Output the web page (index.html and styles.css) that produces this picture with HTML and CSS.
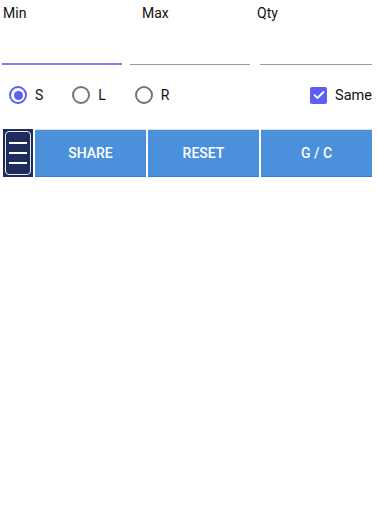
FILE: index.html
```html
<!DOCTYPE html>
<html>
<head>
<meta charset="utf-8">
<link rel="stylesheet" href="styles.css">
</head>
<body>
<div class="fields">
  <div class="field f-min">
    <div class="label">Min</div>
    <div class="line active"></div>
  </div>
  <div class="field f-max">
    <div class="label">Max</div>
    <div class="line"></div>
  </div>
  <div class="field f-qty">
    <div class="label">Qty</div>
    <div class="line"></div>
  </div>
</div>
<div class="options">
  <div class="radio r-s"><span class="circle on"><span class="dot"></span></span><span class="rtext">S</span></div>
  <div class="radio r-l"><span class="circle"></span><span class="rtext">L</span></div>
  <div class="radio r-r"><span class="circle"></span><span class="rtext">R</span></div>
  <div class="check">
    <span class="box"><svg width="12" height="10" viewBox="0 0 12 10"><path d="M1.5 5.2 L4.5 8 L10.5 2" fill="none" stroke="#fff" stroke-width="1.8" stroke-linecap="round" stroke-linejoin="round"/></svg></span>
    <span class="ctext">Same</span>
  </div>
</div>
<div class="buttons">
  <div class="menu"><div class="menu-inner"><span></span><span></span><span></span></div></div>
  <div class="btn">SHARE</div>
  <div class="btn">RESET</div>
  <div class="btn">G / C</div>
</div>
</body>
</html>
```
FILE: styles.css
```css
html, body {
  margin: 0;
  padding: 0;
  background: #fff;
  font-family: Roboto, "Noto Sans", sans-serif;
  color: #111;
}
.fields {
  display: flex;
  padding-top: 5px;
}
.field {
  display: flex;
  flex-direction: column;
}
.label {
  font-size: 14px;
  line-height: 17px;
  height: 59px;
}
.line {
  height: 1px;
  background: #9a9a9a;
}
.line.active {
  height: 2px;
  background: #7b7fe6;
  margin-top: -1px;
}
.f-min { margin-left: 2px; width: 120px; }
.f-min .label { padding-left: 1px; }
.f-max { margin-left: 8px; width: 120px; }
.f-max .label { padding-left: 12px; }
.f-qty { margin-left: 10px; width: 112px; }
.f-qty .label { padding-left: 0; margin-left: -3px; }
.options {
  display: flex;
  align-items: center;
  height: 20px;
  margin-top: 20px;
}
.radio {
  display: flex;
  align-items: center;
}
.circle {
  box-sizing: border-box;
  width: 18px;
  height: 18px;
  border: 2px solid #757575;
  border-radius: 50%;
  display: flex;
  align-items: center;
  justify-content: center;
}
.circle.on {
  border-color: #5b5ff2;
}
.dot {
  width: 9px;
  height: 9px;
  border-radius: 50%;
  background: #5b5ff2;
}
.rtext {
  font-size: 14px;
  margin-left: 8px;
}
.r-s { margin-left: 9px; }
.r-l { margin-left: 29px; }
.r-r { margin-left: 29px; }
.check {
  margin-left: auto;
  margin-right: 5px;
  display: flex;
  align-items: center;
}
.box {
  width: 17px;
  height: 17px;
  border-radius: 2px;
  background: #5b5ff2;
  display: flex;
  align-items: center;
  justify-content: center;
}
.ctext {
  font-size: 14.5px;
  margin-left: 8px;
}
.buttons {
  display: flex;
  margin-top: 24px;
  margin-left: 3px;
  margin-right: 5px;
  height: 48px;
  gap: 2px;
}
.menu {
  width: 30px;
  background: #1f2b5c;
  padding: 2px;
  box-sizing: border-box;
}
.menu-inner {
  box-sizing: border-box;
  height: 100%;
  border: 1px solid #e8ecf5;
  border-radius: 4px;
  display: flex;
  flex-direction: column;
  justify-content: center;
  gap: 8px;
  padding: 0 3px;
}
.menu-inner span {
  height: 2px;
  background: #fff;
  display: block;
}
.btn {
  flex: 1;
  background: #4a90da;
  border-top: 1px solid #d6e2f0;
  border-bottom: 1px solid #2b7fd6;
  color: #fff;
  font-size: 14px;
  font-weight: 500;
  display: flex;
  align-items: center;
  justify-content: center;
  box-sizing: border-box;
}
```
